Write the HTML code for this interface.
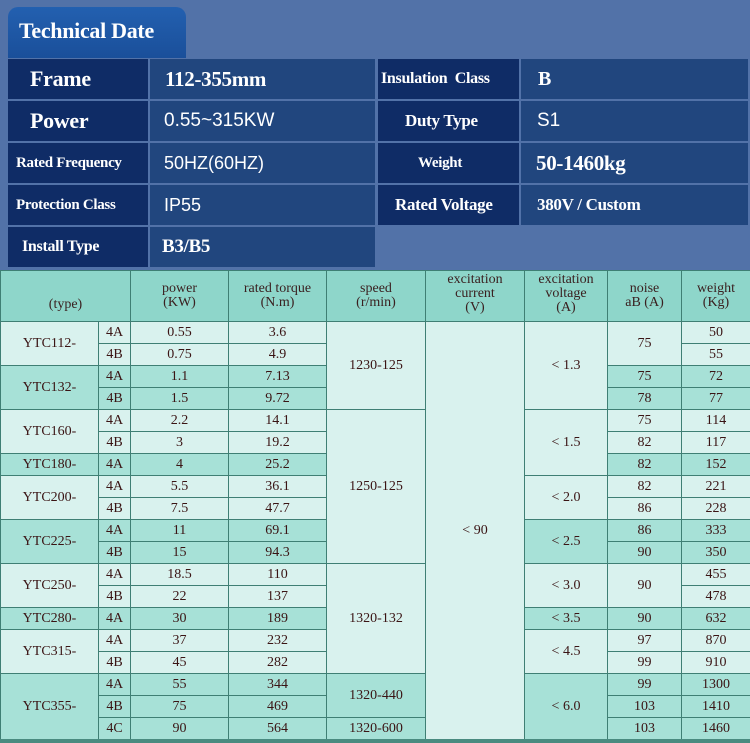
<!DOCTYPE html>
<html><head><meta charset="utf-8"><style>
*{margin:0;padding:0;box-sizing:border-box}
body{width:750px;height:743px;overflow:hidden;background:#5272a8;position:relative;font-family:"Liberation Serif","Noto Serif CJK SC",serif}
.tab{position:absolute;left:8px;top:7px;width:178px;height:51px;border-radius:10px 10px 0 0;background:linear-gradient(#2360b0,#1a4f9a);color:#fff;font-weight:bold;font-size:22px;padding:11px 0 0 11px;letter-spacing:-0.3px}
.c{position:absolute;color:#fff;font-weight:bold;display:flex;align-items:center;white-space:nowrap;letter-spacing:-0.3px}
.l{background:#0f2c66}
.v{background:#21467e}
.s{font-family:"Liberation Sans",sans-serif;font-weight:normal;letter-spacing:0}
table{position:absolute;left:0;top:270px;width:750px;border-collapse:collapse;table-layout:fixed;font-family:"Liberation Serif","Noto Serif CJK SC",serif;font-size:14px;color:#3a1414}
td{border:1px solid #3f7f74;text-align:center;height:22px;padding:0;background:#d9f2ee}
td.d{background:#a7e1d7}
tr.h td{background:#8ed6ca;height:51px;font-size:14px;line-height:14px;color:#3a2020}
.bar{position:absolute;left:0;top:739px;width:750px;height:4px;background:#4a8b80}
</style></head><body>
<div class="tab">Technical Date</div>
<div class="c l" style="left:8px;top:59px;width:140px;height:40px;padding-left:22px;font-size:22px">Frame</div>
<div class="c v" style="left:150px;top:59px;width:225px;height:40px;padding-left:15px;font-size:21px">112-355mm</div>
<div class="c l" style="left:378px;top:59px;width:141px;height:40px;padding-left:3px;font-size:16px">Insulation&nbsp; Class</div>
<div class="c v" style="left:521px;top:59px;width:227px;height:40px;padding-left:17px;font-size:20px">B</div>

<div class="c l" style="left:8px;top:101px;width:140px;height:40px;padding-left:22px;font-size:22px">Power</div>
<div class="c v s" style="left:150px;top:101px;width:225px;height:40px;padding-left:14px;font-size:19px">0.55~315KW</div>
<div class="c l" style="left:378px;top:101px;width:141px;height:40px;padding-left:27px;font-size:17px">Duty Type</div>
<div class="c v s" style="left:521px;top:101px;width:227px;height:40px;padding-left:16px;font-size:19px">S1</div>

<div class="c l" style="left:8px;top:143px;width:140px;height:40px;padding-left:8px;font-size:15px">Rated Frequency</div>
<div class="c v s" style="left:150px;top:143px;width:225px;height:40px;padding-left:14px;font-size:18px">50HZ(60HZ)</div>
<div class="c l" style="left:378px;top:143px;width:141px;height:40px;padding-left:40px;font-size:15px">Weight</div>
<div class="c v" style="left:521px;top:143px;width:227px;height:40px;padding-left:15px;font-size:21px">50-1460kg</div>

<div class="c l" style="left:8px;top:185px;width:140px;height:40px;padding-left:8px;font-size:15px">Protection Class</div>
<div class="c v s" style="left:150px;top:185px;width:225px;height:40px;padding-left:14px;font-size:18px">IP55</div>
<div class="c l" style="left:378px;top:185px;width:141px;height:40px;padding-left:17px;font-size:17px">Rated Voltage</div>
<div class="c v" style="left:521px;top:185px;width:227px;height:40px;padding-left:16px;font-size:17px">380V / Custom</div>

<div class="c l" style="left:8px;top:227px;width:140px;height:40px;padding-left:14px;font-size:16px">Install Type</div>
<div class="c v" style="left:150px;top:227px;width:225px;height:40px;padding-left:12px;font-size:19px">B3/B5</div>

<table>
<colgroup><col style="width:98px"><col style="width:32px"><col style="width:98px"><col style="width:98px"><col style="width:99px"><col style="width:99px"><col style="width:83px"><col style="width:74px"><col style="width:69px"></colgroup>
<tr class="h"><td colspan="2" style="padding-top:18px">(type)</td><td>power<br>(KW)</td><td>rated torque<br>(N.m)</td><td>speed<br>(r/min)</td><td style="vertical-align:top;padding-top:2px">excitation<br>current<br>(V)</td><td style="vertical-align:top;padding-top:2px">excitation<br>voltage<br>(A)</td><td>noise<br>aB (A)</td><td>weight<br>(Kg)</td></tr>
<tr><td rowspan="2">YTC112-</td><td>4A</td><td>0.55</td><td>3.6</td><td rowspan="4">1230-125</td><td rowspan="19">&lt; 90</td><td rowspan="4">&lt; 1.3</td><td rowspan="2">75</td><td>50</td></tr>
<tr><td>4B</td><td>0.75</td><td>4.9</td><td>55</td></tr>
<tr><td rowspan="2" class="d">YTC132-</td><td class="d">4A</td><td class="d">1.1</td><td class="d">7.13</td><td class="d">75</td><td class="d">72</td></tr>
<tr><td class="d">4B</td><td class="d">1.5</td><td class="d">9.72</td><td class="d">78</td><td class="d">77</td></tr>
<tr><td rowspan="2">YTC160-</td><td>4A</td><td>2.2</td><td>14.1</td><td rowspan="7">1250-125</td><td rowspan="3">&lt; 1.5</td><td>75</td><td>114</td></tr>
<tr><td>4B</td><td>3</td><td>19.2</td><td>82</td><td>117</td></tr>
<tr><td class="d">YTC180-</td><td class="d">4A</td><td class="d">4</td><td class="d">25.2</td><td class="d">82</td><td class="d">152</td></tr>
<tr><td rowspan="2">YTC200-</td><td>4A</td><td>5.5</td><td>36.1</td><td rowspan="2">&lt; 2.0</td><td>82</td><td>221</td></tr>
<tr><td>4B</td><td>7.5</td><td>47.7</td><td>86</td><td>228</td></tr>
<tr><td rowspan="2" class="d">YTC225-</td><td class="d">4A</td><td class="d">11</td><td class="d">69.1</td><td rowspan="2" class="d">&lt; 2.5</td><td class="d">86</td><td class="d">333</td></tr>
<tr><td class="d">4B</td><td class="d">15</td><td class="d">94.3</td><td class="d">90</td><td class="d">350</td></tr>
<tr><td rowspan="2">YTC250-</td><td>4A</td><td>18.5</td><td>110</td><td rowspan="5">1320-132</td><td rowspan="2">&lt; 3.0</td><td rowspan="2">90</td><td>455</td></tr>
<tr><td>4B</td><td>22</td><td>137</td><td>478</td></tr>
<tr><td class="d">YTC280-</td><td class="d">4A</td><td class="d">30</td><td class="d">189</td><td class="d">&lt; 3.5</td><td class="d">90</td><td class="d">632</td></tr>
<tr><td rowspan="2">YTC315-</td><td>4A</td><td>37</td><td>232</td><td rowspan="2">&lt; 4.5</td><td>97</td><td>870</td></tr>
<tr><td>4B</td><td>45</td><td>282</td><td>99</td><td>910</td></tr>
<tr><td rowspan="3" class="d">YTC355-</td><td class="d">4A</td><td class="d">55</td><td class="d">344</td><td rowspan="2" class="d">1320-440</td><td rowspan="3" class="d">&lt; 6.0</td><td class="d">99</td><td class="d">1300</td></tr>
<tr><td class="d">4B</td><td class="d">75</td><td class="d">469</td><td class="d">103</td><td class="d">1410</td></tr>
<tr><td class="d">4C</td><td class="d">90</td><td class="d">564</td><td class="d">1320-600</td><td class="d">103</td><td class="d">1460</td></tr>
</table>
<div class="bar"></div>
</body></html>
